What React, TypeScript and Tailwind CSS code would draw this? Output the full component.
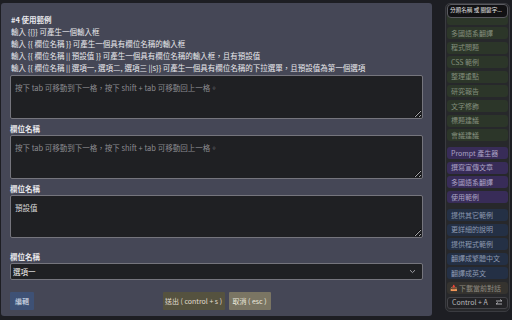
import React from "react";

const green = ["多國語系翻譯", "程式問題", "CSS 範例", "整理重點", "研究報告", "文字修飾", "標題建議", "會議建議"];
const purple = ["Prompt 產生器", "撰寫宣傳文章", "多國語系翻譯", "使用範例"];
const blue = ["提供其它範例", "更詳細的說明", "提供程式範例", "翻譯成繁體中文", "翻譯成英文"];

const placeholder = "按下 tab 可移動到下一格，按下 shift + tab 可移動回上一格。";

function Item({ label, cls }: { label: string; cls: string }) {
  return (
    <div className={`h-[12px] shrink-0 rounded-[3px] px-[4px] flex items-center text-[7px] leading-none whitespace-nowrap overflow-hidden ${cls}`}>
      {label}
    </div>
  );
}

export default function App() {
  const font = "font-['Noto_Sans_CJK_TC','Noto_Sans',sans-serif]";
  return (
    <div className={`w-[512px] h-[320px] bg-[#1d1e23] flex pt-[3px] pl-[1px] overflow-hidden ${font}`}>
      {/* Modal */}
      <div className="w-[431px] h-[313px] bg-[#454756] rounded-[3px] px-[9px] pt-[11px] flex flex-col text-[#e8e8ec]">
        <div className="text-[7.5px] leading-[12px] pl-[1px]">
          <div className="font-bold">#4 使用範例</div>
          <div>輸入 {"{{}}"} 可產生一個輸入框</div>
          <div>輸入 {"{{ 欄位名稱 }}"} 可產生一個具有欄位名稱的輸入框</div>
          <div>輸入 {"{{ 欄位名稱 || 預設值 }}"} 可產生一個具有欄位名稱的輸入框，且有預設值</div>
          <div>輸入 {"{{ 欄位名稱 || 選項一, 選項二, 選項三 ||s}}"} 可產生一個具有欄位名稱的下拉選單，且預設值為第一個選項</div>
        </div>
        <textarea
          readOnly
          placeholder={placeholder}
          className="mt-[1px] h-[44px] w-full bg-[#1f2023] border border-[#75757d] rounded-[2px] px-[4px] py-[6px] text-[7.5px] leading-[12px] text-[#e0e0e0] placeholder:text-[#8b8b90] outline-none"
        />
        <div className="mt-[4px] text-[7.5px] leading-[12px] font-bold">欄位名稱</div>
        <textarea
          readOnly
          placeholder={placeholder}
          className="h-[44px] w-full bg-[#1f2023] border border-[#75757d] rounded-[2px] px-[4px] py-[6px] text-[7.5px] leading-[12px] text-[#e0e0e0] placeholder:text-[#8b8b90] outline-none"
        />
        <div className="mt-[4px] text-[7.5px] leading-[12px] font-bold">欄位名稱</div>
        <textarea
          readOnly
          defaultValue="預設值"
          className="h-[43px] w-full bg-[#1f2023] border border-[#75757d] rounded-[2px] px-[4px] py-[6px] text-[7.5px] leading-[12px] text-[#d8d8d8] outline-none"
        />
        <div className="mt-[13px] text-[7.5px] leading-[12px] font-bold">欄位名稱</div>
        <div className="h-[17px] w-full bg-[#1f2023] border border-[#75757d] rounded-[2px] px-[2px] flex items-center justify-between">
          <span className="text-[7.5px] leading-none text-[#f0f0f0]">選項一</span>
          <svg width="7" height="5" viewBox="0 0 7 5" className="mr-[4px]">
            <path d="M1 1.2 L3.5 3.6 L6 1.2" fill="none" stroke="#a0a0a6" strokeWidth="1" />
          </svg>
        </div>
        <div className="mt-[12px] grid grid-cols-[1fr_auto_1fr] items-center">
          <div className="flex">
            <div className="h-[18px] w-[24px] bg-[#3e5175] rounded-[1px] flex items-center justify-center text-[7px] text-[#dfe3ee]">編輯</div>
          </div>
          <div className="flex gap-[4px]">
            <div className="h-[18px] w-[62px] bg-[#55523f] rounded-[1px] flex items-center justify-center text-[7px] text-[#e0ddd0] whitespace-nowrap">送出 ( control + s )</div>
            <div className="h-[18px] w-[42px] bg-[#7a7563] rounded-[1px] flex items-center justify-center text-[7px] text-[#ece9df] whitespace-nowrap">取消 ( esc )</div>
          </div>
          <div />
        </div>
      </div>

      {/* Sidebar */}
      <div className="ml-[13px] w-[65px] h-[309px] bg-[#27282b] border border-[#3a3b40] rounded-[5px] relative overflow-hidden">
        <div className="absolute left-[1px] right-[1px] top-[0px] h-[14px] bg-[#111113] border border-[#5a5a60] rounded-[4px] flex items-center px-[2px] z-10">
          <span className="text-[5.6px] leading-none text-[#e4e4e4] whitespace-nowrap">分類名稱 或 關鍵字...</span>
        </div>
        <div className="flex flex-col px-[1px] pt-[8.5px]">
          <div className="flex flex-col gap-[2.6px]">
            <div className="h-[12px] shrink-0 rounded-[3px] bg-[#2c3629]" />
            {green.map((g, i) => (
              <Item key={"g" + i} label={g} cls="bg-[#2c3629] text-[#838e7c]" />
            ))}
          </div>
          <div className="mt-[6px] flex flex-col gap-[2.6px]">
            {purple.map((g, i) => (
              <Item key={"p" + i} label={g} cls="bg-[#382c58] text-[#aaa2c4]" />
            ))}
          </div>
          <div className="mt-[6px] flex flex-col gap-[2.6px]">
            {blue.map((g, i) => (
              <Item key={"b" + i} label={g} cls="bg-[#243045] text-[#8c99b0]" />
            ))}
            <div className="h-[12px] shrink-0 rounded-[3px] px-[3px] flex items-center gap-[2px] bg-[#35332f] text-[7px] leading-none text-[#8e8a80] whitespace-nowrap">
              <span className="text-[6px]">📥</span>
              <span>下載當前對話</span>
            </div>
            <div className="h-[12px] shrink-0 rounded-[3px] px-[4px] flex items-center justify-between bg-[#222225] border border-[#444449] text-[7px] leading-none text-[#b8b8bc] whitespace-nowrap">
              <span>Control + A</span>
              <svg width="8" height="7" viewBox="0 0 8 7">
                <path d="M1 2 H7 M5 0.5 L7 2 M7 5 H1 M3 3.5 L1 5" fill="none" stroke="#b8b8bc" strokeWidth="0.9" />
              </svg>
            </div>
          </div>
        </div>
      </div>
    </div>
  );
}
